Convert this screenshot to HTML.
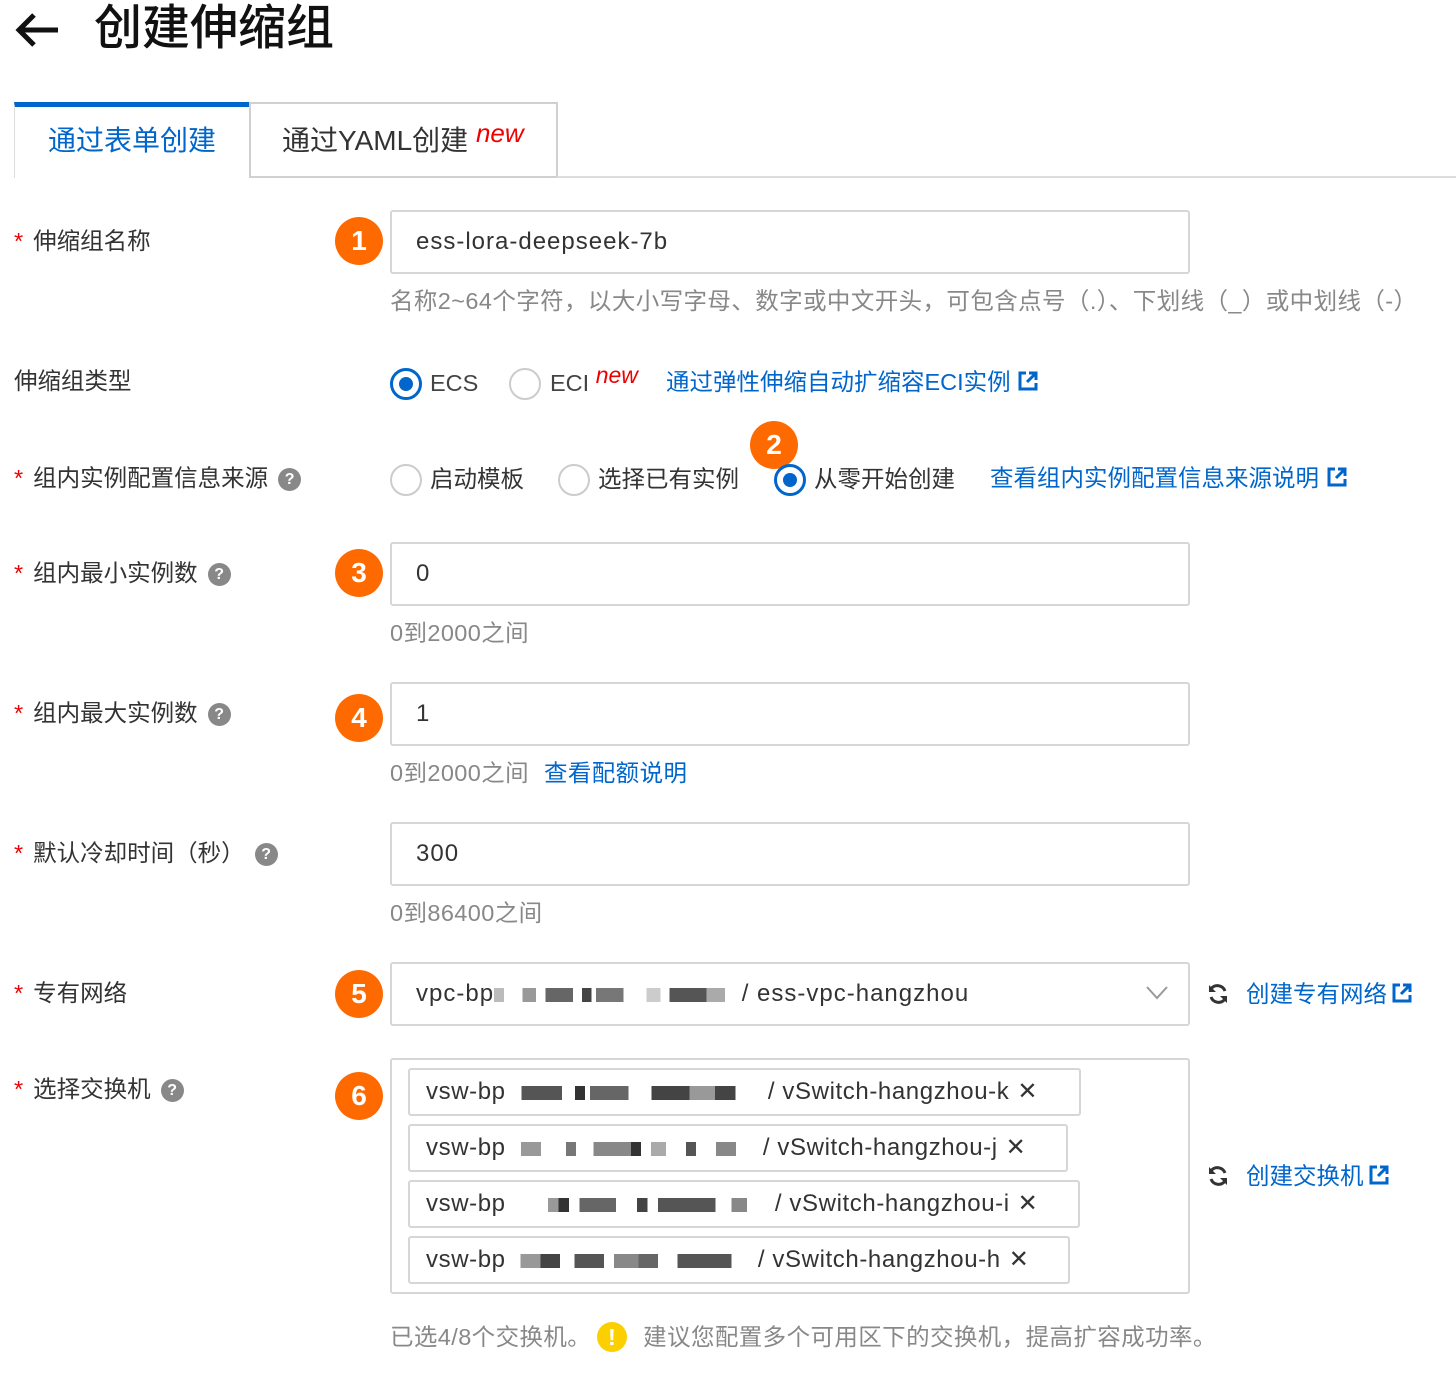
<!DOCTYPE html>
<html><head><meta charset="utf-8"><style>
*{margin:0;padding:0;box-sizing:border-box}
body{width:1456px;height:1374px;background:#fff;position:relative;overflow:hidden;font-family:"Liberation Sans","Noto Sans CJK SC",sans-serif;color:#333;font-size:23.5px}
.a{position:absolute;white-space:nowrap;line-height:30px}
.lbl{color:#333}
.star{color:#e00;margin-right:10px}
.hint{color:#888;letter-spacing:0.4px}
.blue{color:#0066cc}
.q{display:inline-block;width:23px;height:23px;border-radius:50%;background:#888;color:#fff;font-size:16px;font-weight:bold;line-height:23px;text-align:center;vertical-align:2px;margin-left:10px;letter-spacing:0}
.badge{position:absolute;width:48px;height:48px;border-radius:50%;background:#ff6a00;color:#fff;font-size:28px;font-weight:bold;line-height:48px;text-align:center}
.inp{position:absolute;left:390px;width:800px;height:64px;border:2px solid #d6d6d6;border-radius:3px;padding-left:24px;line-height:60px;font-size:24px;letter-spacing:1px;color:#333;white-space:nowrap}
.radio{position:absolute;width:32px;height:32px;border-radius:50%;border:2px solid #ccc;background:#fff}
.radio.on{border:3px solid #0066cc}
.radio.on::after{content:"";position:absolute;left:6px;top:6px;width:14px;height:14px;border-radius:50%;background:#0066cc}
.new{color:#e00;font-style:italic;font-size:23px}
.tag{position:absolute;left:408px;height:48px;border:2px solid #d6d6d6;border-radius:3px;padding-left:16px;line-height:44px;white-space:nowrap;color:#333;font-size:24px;letter-spacing:0.6px}
.px{display:inline-block;height:14px;vertical-align:-1px}
.x{display:inline-block;margin-left:8px;font-size:24px}
</style></head><body>
<svg class="a" style="left:14px;top:10px" width="48" height="40" viewBox="0 0 48 40"><path d="M44 20H6M20 5L5 20L20 35" fill="none" stroke="#111" stroke-width="5"/></svg>
<div class="a" style="left:94px;top:0px;font-size:48px;line-height:58px;color:#111;font-weight:500">创建伸缩组</div>

<div style="position:absolute;left:14px;top:102px;width:235px;height:76px;border-left:1px solid #ddd;border-top:5px solid #0066cc;background:#fff"></div>
<div class="a blue" style="left:48px;top:124px;font-size:28px;line-height:34px">通过表单创建</div>
<div style="position:absolute;left:249px;top:102px;width:309px;height:76px;border:2px solid #d0d0d0"></div>
<div class="a" style="left:282px;top:124px;font-size:28px;line-height:34px;color:#333">通过YAML创建 <span class="new" style="font-size:26px;position:relative;top:-8px">new</span></div>
<div style="position:absolute;left:557px;top:176px;width:899px;height:2px;background:#ddd"></div>

<div class="a lbl" style="left:14px;top:226px"><span class="star">*</span>伸缩组名称</div>
<div class="badge" style="left:335px;top:217px">1</div>
<div class="inp" style="top:210px">ess-lora-deepseek-7b</div>
<div class="a hint" style="left:390px;top:286px">名称2~64个字符，以大小写字母、数字或中文开头，可包含点号（.）、下划线（_）或中划线（-）</div>

<div class="a lbl" style="left:14px;top:366px">伸缩组类型</div>
<div class="radio on" style="left:390px;top:368px"></div>
<div class="a" style="left:430px;top:368px;color:#444">ECS</div>
<div class="radio" style="left:509px;top:368px"></div>
<div class="a" style="left:550px;top:368px;color:#444">ECI <span class="new" style="position:relative;top:-8px">new</span></div>
<div class="a blue" style="left:666px;top:367px">通过弹性伸缩自动扩缩容ECI实例 <svg width="22" height="22" viewBox="0 0 22 22" style="vertical-align:-2px"><path d="M9 3H3v16h16v-6M12 3h7v7M19 3l-9 9" fill="none" stroke="#0066cc" stroke-width="3"/></svg></div>

<div class="a lbl" style="left:14px;top:463px"><span class="star">*</span>组内实例配置信息来源<span class="q">?</span></div>
<div class="radio" style="left:390px;top:464px"></div>
<div class="a" style="left:430px;top:464px">启动模板</div>
<div class="radio" style="left:558px;top:464px"></div>
<div class="a" style="left:598px;top:464px">选择已有实例</div>
<div class="badge" style="left:750px;top:421px">2</div>
<div class="radio on" style="left:774px;top:464px"></div>
<div class="a" style="left:814px;top:464px">从零开始创建</div>
<div class="a blue" style="left:990px;top:463px">查看组内实例配置信息来源说明 <svg width="22" height="22" viewBox="0 0 22 22" style="vertical-align:-2px"><path d="M9 3H3v16h16v-6M12 3h7v7M19 3l-9 9" fill="none" stroke="#0066cc" stroke-width="3"/></svg></div>

<div class="a lbl" style="left:14px;top:558px"><span class="star">*</span>组内最小实例数<span class="q">?</span></div>
<div class="badge" style="left:335px;top:549px">3</div>
<div class="inp" style="top:542px">0</div>
<div class="a hint" style="left:390px;top:618px">0到2000之间</div>

<div class="a lbl" style="left:14px;top:698px"><span class="star">*</span>组内最大实例数<span class="q">?</span></div>
<div class="badge" style="left:335px;top:694px">4</div>
<div class="inp" style="top:682px">1</div>
<div class="a hint" style="left:390px;top:758px">0到2000之间 <span class="blue" style="margin-left:8px">查看配额说明</span></div>

<div class="a lbl" style="left:14px;top:838px"><span class="star">*</span>默认冷却时间（秒）<span class="q">?</span></div>
<div class="inp" style="top:822px">300</div>
<div class="a hint" style="left:390px;top:898px">0到86400之间</div>

<div class="a lbl" style="left:14px;top:978px"><span class="star">*</span>专有网络</div>
<div class="badge" style="left:335px;top:970px">5</div>
<div class="inp" style="top:962px">vpc-bp<span class="px" style="width:10px;background:#bbb"></span><span class="px" style="width:230px;background:linear-gradient(90deg,#fff 0 8%,#999 8% 14%,#fff 14% 18%,#666 18% 30%,#fff 30% 34%,#444 34% 38%,#fff 38% 40%,#777 40% 52%,#fff 52% 62%,#ccc 62% 68%,#fff 68% 72%,#555 72% 88%,#aaa 88% 96%,#fff 96%)"></span> / ess-vpc-hangzhou
<svg style="position:absolute;right:20px;top:22px" width="22" height="14" viewBox="0 0 22 14"><path d="M1 1l10 11L21 1" fill="none" stroke="#999" stroke-width="2"/></svg></div>
<svg class="a" style="left:1206px;top:982px" width="24" height="24" viewBox="0 0 24 24"><path d="M19 9A8 8 0 0 0 5 7M5 15a8 8 0 0 0 14 2" fill="none" stroke="#333" stroke-width="3"/><path d="M3 3v7h7zM21 21v-7h-7z" fill="#333"/></svg>
<div class="a blue" style="left:1246px;top:979px">创建专有网络<svg width="22" height="22" viewBox="0 0 22 22" style="vertical-align:-2px;margin-left:4px"><path d="M9 3H3v16h16v-6M12 3h7v7M19 3l-9 9" fill="none" stroke="#0066cc" stroke-width="3"/></svg></div>

<div class="a lbl" style="left:14px;top:1074px"><span class="star">*</span>选择交换机<span class="q">?</span></div>
<div class="badge" style="left:335px;top:1072px">6</div>
<div style="position:absolute;left:390px;top:1058px;width:800px;height:236px;border:2px solid #d6d6d6;border-radius:3px"></div>
<div class="tag" style="top:1068px;width:673px">vsw-bp<span class="px" style="width:255px;background:linear-gradient(90deg,#fff 0 6%,#555 6% 22%,#fff 22% 27%,#333 27% 31%,#fff 31% 33%,#666 33% 48%,#fff 48% 57%,#444 57% 72%,#999 72% 82%,#444 82% 90%,#fff 90%)"></span> / vSwitch-hangzhou-k<span class="x">✕</span></div>
<div class="tag" style="top:1124px;width:660px">vsw-bp<span class="px" style="width:250px;background:linear-gradient(90deg,#fff 0 6%,#999 6% 14%,#fff 14% 24%,#777 24% 28%,#fff 28% 35%,#888 35% 50%,#333 50% 54%,#fff 54% 58%,#aaa 58% 64%,#fff 64% 72%,#555 72% 76%,#fff 76% 84%,#888 84% 92%,#fff 92%)"></span> / vSwitch-hangzhou-j<span class="x">✕</span></div>
<div class="tag" style="top:1180px;width:672px">vsw-bp<span class="px" style="width:262px;background:linear-gradient(90deg,#fff 0 16%,#999 16% 20%,#333 20% 24%,#fff 24% 28%,#666 28% 42%,#fff 42% 50%,#444 50% 54%,#fff 54% 58%,#555 58% 80%,#fff 80% 86%,#888 86% 92%,#fff 92%)"></span> / vSwitch-hangzhou-i<span class="x">✕</span></div>
<div class="tag" style="top:1236px;width:662px">vsw-bp<span class="px" style="width:245px;background:linear-gradient(90deg,#fff 0 6%,#999 6% 14%,#444 14% 22%,#fff 22% 28%,#555 28% 40%,#fff 40% 44%,#888 44% 54%,#666 54% 62%,#fff 62% 70%,#555 70% 92%,#fff 92%)"></span> / vSwitch-hangzhou-h<span class="x">✕</span></div>
<svg class="a" style="left:1206px;top:1164px" width="24" height="24" viewBox="0 0 24 24"><path d="M19 9A8 8 0 0 0 5 7M5 15a8 8 0 0 0 14 2" fill="none" stroke="#333" stroke-width="3"/><path d="M3 3v7h7zM21 21v-7h-7z" fill="#333"/></svg>
<div class="a blue" style="left:1246px;top:1161px">创建交换机<svg width="22" height="22" viewBox="0 0 22 22" style="vertical-align:-2px;margin-left:4px"><path d="M9 3H3v16h16v-6M12 3h7v7M19 3l-9 9" fill="none" stroke="#0066cc" stroke-width="3"/></svg></div>

<div class="a hint" style="left:390px;top:1322px">已选4/8个交换机。<span style="display:inline-block;width:30px;height:30px;border-radius:50%;background:#fcd000;color:#fff;font-weight:bold;text-align:center;line-height:30px;vertical-align:0;margin:0 16px 0 6px">!</span>建议您配置多个可用区下的交换机，提高扩容成功率。</div>
</body></html>
